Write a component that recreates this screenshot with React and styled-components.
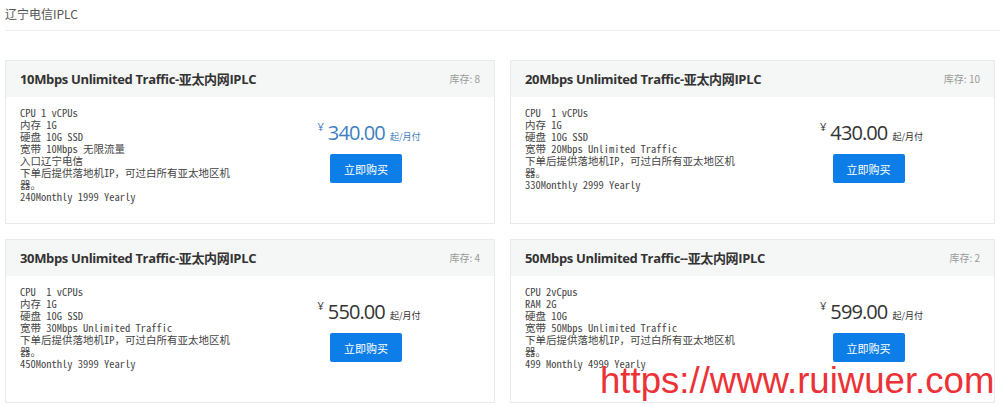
import React from 'react';
import styled, { createGlobalStyle } from 'styled-components';

const GlobalStyle = createGlobalStyle`
  html, body {
    margin: 0;
    padding: 0;
    background: #fff;
  }
  body {
    font-family: "Open Sans", "Noto Sans CJK SC", sans-serif;
    color: #333;
  }
`;

const Page = styled.div`
  position: relative;
  width: 1000px;
  height: 406px;
  overflow: hidden;
  padding: 0 5px;
  box-sizing: border-box;
`;

const GroupTitle = styled.div`
  font-family: "Noto Sans CJK SC", sans-serif;
  font-size: 12px;
  line-height: 16px;
  color: #555;
  padding-top: 6px;
  padding-bottom: 8px;
  margin-right: -5px;
  border-bottom: 1px solid #eceeef;
`;

const Grid = styled.div`
  display: grid;
  grid-template-columns: 490px 485px;
  column-gap: 15px;
  row-gap: 15px;
  margin-top: 29px;
`;

const Card = styled.div`
  border: 1px solid #e8eaeb;
  background: #fff;
  display: flex;
  flex-direction: column;
`;

const CardHead = styled.div`
  height: 36px;
  background: #f5f6f6;
  display: flex;
  align-items: center;
  justify-content: space-between;
  padding: 0 14px 2px 14px;
  box-sizing: border-box;
`;

const CardTitle = styled.div`
  font-family: "Open Sans", "Noto Sans CJK SC", sans-serif;
  font-weight: 700;
  font-size: 13px;
  color: #333;
  letter-spacing: -0.35px;
`;

const Stock = styled.div`
  font-family: "Noto Sans CJK SC", sans-serif;
  font-size: 10px;
  color: #9a9a9a;
`;

const CardBody = styled.div`
  height: 126px;
  display: grid;
  grid-template-columns: 232px 1fr;
  padding: 10px 14px 0 14px;
  box-sizing: border-box;
`;

const Specs = styled.div`
  font-family: "Noto Sans Mono CJK SC", "Liberation Mono", "Noto Sans CJK SC", monospace;
  font-size: 10.5px;
  line-height: 12px;
  color: #454545;
  white-space: pre-wrap;
  width: 216px;
`;

const PriceCol = styled.div`
  display: flex;
  flex-direction: column;
  align-items: center;
  padding-top: 14px;
  padding-right: ${(p) => p.$shift || 0}px;
`;

const PriceLine = styled.div`
  display: flex;
  align-items: baseline;
  color: ${(p) => (p.$accent ? '#3d7fc0' : '#333')};
  padding-left: 6px;
`;

const Yen = styled.span`
  font-family: "Open Sans", sans-serif;
  font-size: 11px;
  align-self: flex-start;
  margin-top: -2px;
  margin-right: 4px;
`;

const Amount = styled.span`
  font-family: "Open Sans", sans-serif;
  font-size: 20px;
  line-height: 24px;
  letter-spacing: -0.9px;
`;

const Unit = styled.span`
  font-family: "Noto Sans CJK SC", sans-serif;
  font-size: 9px;
  margin-left: 5px;
`;

const BuyButton = styled.button`
  margin-top: 9px;
  width: 72px;
  height: 29px;
  border: none;
  border-radius: 2px;
  background: #0d7ee8;
  color: #fff;
  font-family: "Noto Sans CJK SC", sans-serif;
  font-size: 11px;
  cursor: pointer;
  padding: 0;
`;

const Watermark = styled.div`
  position: absolute;
  left: 600px;
  top: 363px;
  font-family: "Liberation Sans", Arial, sans-serif;
  font-size: 36.6px;
  line-height: 36px;
  color: #ec3236;
  white-space: nowrap;
`;

const tail = '下单后提供落地机IP，可过白所有亚太地区机器。';

const plans = [
  {
    title: '10Mbps Unlimited Traffic-亚太内网IPLC',
    stock: 8,
    price: '340.00',
    accent: true,
    specs: ['CPU 1 vCPUs', '内存 1G', '硬盘 10G SSD', '宽带 10Mbps 无限流量', '入口辽宁电信', tail, '240Monthly 1999 Yearly'],
  },
  {
    title: '20Mbps Unlimited Traffic-亚太内网IPLC',
    stock: 10,
    price: '430.00',
    specs: ['CPU  1 vCPUs', '内存 1G', '硬盘 10G SSD', '宽带 20Mbps Unlimited Traffic', tail, '330Monthly 2999 Yearly'],
  },
  {
    title: '30Mbps Unlimited Traffic-亚太内网IPLC',
    stock: 4,
    price: '550.00',
    specs: ['CPU  1 vCPUs', '内存 1G', '硬盘 10G SSD', '宽带 30Mbps Unlimited Traffic', tail, '450Monthly 3999 Yearly'],
  },
  {
    title: '50Mbps Unlimited Traffic--亚太内网IPLC',
    stock: 2,
    price: '599.00',
    specs: ['CPU 2vCpus', 'RAM 2G', '硬盘 10G', '宽带 50Mbps Unlimited Traffic', tail, '499 Monthly 4999 Yearly'],
  },
];

function PlanCard({ plan, shift }) {
  return (
    <Card>
      <CardHead>
        <CardTitle>{plan.title}</CardTitle>
        <Stock>库存: {plan.stock}</Stock>
      </CardHead>
      <CardBody>
        <Specs>{plan.specs.join('\n')}</Specs>
        <PriceCol $shift={shift}>
          <PriceLine $accent={plan.accent}>
            <Yen>¥</Yen>
            <Amount>{plan.price}</Amount>
            <Unit>起/月付</Unit>
          </PriceLine>
          <BuyButton>立即购买</BuyButton>
        </PriceCol>
      </CardBody>
    </Card>
  );
}

export default function App() {
  return (
    <>
      <GlobalStyle />
      <Page>
        <GroupTitle>辽宁电信IPLC</GroupTitle>
        <Grid>
          {plans.map((p, i) => (
            <PlanCard key={p.title} plan={p} shift={i % 2 === 0 ? 0 : -5} />
          ))}
        </Grid>
        <Watermark>https://www.ruiwuer.com</Watermark>
      </Page>
    </>
  );
}
